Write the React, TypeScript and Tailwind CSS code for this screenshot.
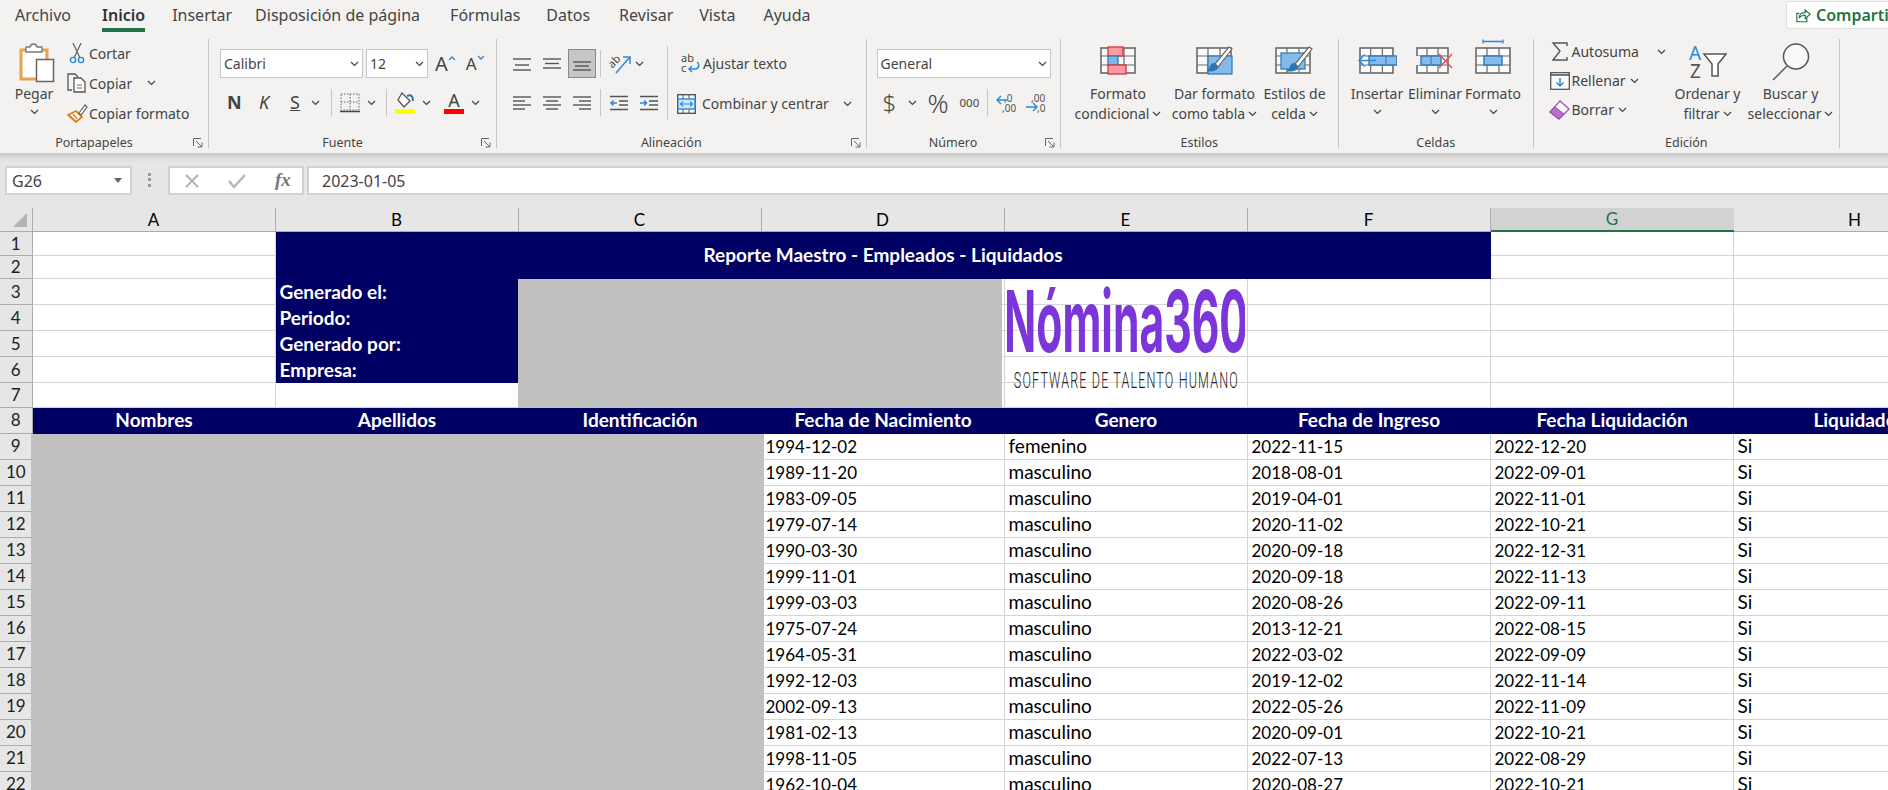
import React from "react";

const NAVY = "bg-[#000064]";

const Chev = ({ className = "" }: { className?: string }) => (
  <svg width="9" height="6" viewBox="0 0 9 6" className={`shrink-0 ${className}`}>
    <path d="M1 1l3.5 3.5L8 1" fill="none" stroke="#444" strokeWidth="1.2" />
  </svg>
);

const Launcher = () => (
  <svg width="10" height="10" viewBox="0 0 10 10">
    <path d="M.5 8V.5H8M3 3l5.5 5.5M9 4.5V9H4.5" fill="none" stroke="#666" strokeWidth="1" />
  </svg>
);

function Group({ w, label, launcher, children }: { w: string; label: string; launcher?: boolean; children: React.ReactNode }) {
  return (
    <div className={`${w} h-[109px] shrink-0 border-r border-[#c8c6c4] flex flex-col`}>
      <div className="h-[99px] flex">{children}</div>
      <div className="flex items-center h-[10px] text-[12.5px] text-[#444]">
        <span className="flex-1 text-center">{label}</span>
        {launcher && (
          <span className="w-[20px] pl-[5px] flex items-center">
            <Launcher />
          </span>
        )}
      </div>
    </div>
  );
}

function Large({ w, icon, lines, chevLine = false }: { w: string; icon: React.ReactNode; lines: string[]; chevLine?: boolean }) {
  return (
    <div className={`${w} shrink-0 flex flex-col items-center`}>
      <div className="h-[45px] flex justify-center">{icon}</div>
      {lines.map((l, i) => (
        <div key={l} className="h-[20px] leading-[20px] flex items-center gap-[3px] whitespace-nowrap">
          {l}
          {i === lines.length - 1 && !chevLine && <Chev />}
        </div>
      ))}
      {chevLine && (
        <div className="h-[16px] flex items-center">
          <Chev />
        </div>
      )}
    </div>
  );
}

function SmallRow({ icon, label, chev, h = "h-[30px]" }: { icon: React.ReactNode; label: string; chev?: string; h?: string }) {
  return (
    <div className={`${h} flex items-center whitespace-nowrap`}>
      <span className="w-[24px] flex justify-center shrink-0">{icon}</span>
      {label}
      {chev && <Chev className={chev} />}
    </div>
  );
}

const Lines = ({ ys, xs }: { ys: number[]; xs: [number, number][] }) => (
  <svg width="18" height="16" viewBox="0 0 18 16">
    {ys.map((y, i) => (
      <path key={y} d={`M${xs[i][0]} ${y}H${xs[i][1]}`} stroke="#555" strokeWidth="1.4" />
    ))}
  </svg>
);

const Arrow = ({ dir }: { dir: "l" | "r" }) => (
  <svg width="18" height="16" viewBox="0 0 18 16">
    <path d="M0 1.5H18M9 6H18M9 10H18M0 14.5H18" stroke="#555" strokeWidth="1.4" />
    {dir === "l" ? (
      <path d="M7 8H1M3.5 5.5L1 8l2.5 2.5" fill="none" stroke="#2b88d8" strokeWidth="1.5" />
    ) : (
      <path d="M0 8H6.5M4 5.5L6.5 8 4 10.5" fill="none" stroke="#2b88d8" strokeWidth="1.5" />
    )}
  </svg>
);

const GridBase = ({ x = 0, y = 0, w = 36, h = 27 }: { x?: number; y?: number; w?: number; h?: number }) => {
  const cx = w / 3;
  const cy = h / 3;
  return (
    <g>
      <rect x={x + 1} y={y + 1} width={w - 2} height={h - 2} fill="#fafafa" stroke="#6a6a6a" strokeWidth="1.6" />
      <path
        d={`M${x + cx} ${y + 1}V${y + h - 1}M${x + cx * 2} ${y + 1}V${y + h - 1}M${x + 1} ${y + cy}H${x + w - 1}M${x + 1} ${y + cy * 2}H${x + w - 1}`}
        stroke="#6a6a6a"
        strokeWidth="1.2"
      />
    </g>
  );
};

const Brush = ({ x, y }: { x: number; y: number }) => (
  <g transform={`translate(${x} ${y})`}>
    <path d="M24 0L27 2 13 20 10 17Z" fill="#fff" stroke="#666" strokeWidth="1.2" />
    <path d="M9 16c3 1 4 3 4 5-2 4-8 4-12 3 3-1 3-3 4-5 1-2 2-3 4-3Z" fill="#2e75b6" />
  </g>
);

const ribbon = {
  paste: (
    <svg width="42" height="45" viewBox="0 0 42 45">
      <rect x="8" y="11" width="26" height="29" fill="#fff" stroke="#e8a24e" strokeWidth="3" />
      <path d="M13 13V8h4c1-4 6-4 7 0h5v5Z" fill="#fff" stroke="#777" strokeWidth="1.3" />
      <rect x="23.5" y="20.5" width="17" height="22" fill="#fff" stroke="#666" strokeWidth="1.5" />
    </svg>
  ),
  cut: (
    <svg width="16" height="21" viewBox="0 0 16 21">
      <path d="M4 0l7 15M12 0L5 15" stroke="#666" strokeWidth="1.3" fill="none" />
      <circle cx="4" cy="17" r="2.6" fill="none" stroke="#2b88d8" strokeWidth="1.4" />
      <circle cx="12" cy="17" r="2.6" fill="none" stroke="#2b88d8" strokeWidth="1.4" />
    </svg>
  ),
  copy: (
    <svg width="20" height="20" viewBox="0 0 20 20">
      <path d="M5 17H1V1h7l3 3" fill="none" stroke="#555" strokeWidth="1.3" />
      <path d="M7 5h7l4 4v10H7Z" fill="#fff" stroke="#555" strokeWidth="1.3" />
      <path d="M10 12h5M10 15h5" stroke="#666" strokeWidth="1.2" />
    </svg>
  ),
  painter: (
    <svg width="21" height="20" viewBox="0 0 21 20">
      <path d="M1 12l8-4 6 6-6 5Z" fill="#fff" stroke="#e07b1a" strokeWidth="1.8" />
      <path d="M3 13l5 5M6 11l4 5" stroke="#e07b1a" strokeWidth="1.4" />
      <path d="M12 10l6-8 2 2-6 8Z" fill="#fff" stroke="#666" strokeWidth="1.2" />
    </svg>
  ),
  borders: (
    <svg width="20" height="20" viewBox="0 0 20 20">
      <path d="M1 1H19V17H1ZM10 1V17M1 9H19" fill="none" stroke="#666" strokeWidth="1" strokeDasharray="1.5 1.5" />
      <path d="M0 18.5H20" stroke="#444" strokeWidth="1.5" />
    </svg>
  ),
  fill: (
    <svg width="20" height="22" viewBox="0 0 20 22">
      <path d="M7 1l8 8-6 6-6-7Z" fill="#fff" stroke="#555" strokeWidth="1.3" />
      <path d="M12 4c4-2 6 0 6 5" fill="none" stroke="#2e75b6" strokeWidth="2" />
      <rect x="0" y="17" width="20" height="5" fill="#ffff00" />
    </svg>
  ),
  wrap: (
    <svg width="19" height="21" viewBox="0 0 19 21">
      <text x="0" y="9" fontSize="11" fill="#444" fontFamily="Noto Sans">ab</text>
      <text x="0" y="19" fontSize="11" fill="#444" fontFamily="Noto Sans">c</text>
      <path d="M16 9c3 2 2 7-2 7H8M11 13l-3 3 3 3" fill="none" stroke="#2b88d8" strokeWidth="1.5" />
    </svg>
  ),
  merge: (
    <svg width="19" height="20" viewBox="0 0 19 20">
      <rect x=".7" y=".7" width="17.6" height="18.6" fill="#fff" stroke="#555" strokeWidth="1.4" />
      <path d="M6 1V5M12 1V5M6 15V19M12 15V19" stroke="#555" />
      <rect x="1" y="5" width="17" height="10" fill="#d4e8f8" stroke="#2b88d8" strokeWidth="1.4" />
      <path d="M3.5 10H15.5M6 7.5L3.5 10 6 12.5M13 7.5l2.5 2.5L13 12.5" fill="none" stroke="#2b88d8" strokeWidth="1.2" />
    </svg>
  ),
  orient: (
    <svg width="23" height="20" viewBox="0 0 23 20">
      <text x="1" y="11" fontSize="11" fill="#444" fontFamily="Noto Sans" transform="rotate(-45 7 9)">ab</text>
      <path d="M8 19L21 4M15 3h7v7" fill="none" stroke="#2b88d8" strokeWidth="1.5" />
    </svg>
  ),
  decInc: (
    <svg width="20" height="20" viewBox="0 0 20 20">
      <text x="8" y="9" fontSize="10" fill="#555" fontFamily="Noto Sans">,0</text>
      <text x="6" y="19" fontSize="10" fill="#555" fontFamily="Noto Sans">,00</text>
      <path d="M12 7H1M5 3L1 7l4 4" fill="none" stroke="#2b88d8" strokeWidth="1.4" />
    </svg>
  ),
  decDec: (
    <svg width="20" height="20" viewBox="0 0 20 20">
      <text x="5" y="9" fontSize="10" fill="#555" fontFamily="Noto Sans">,00</text>
      <text x="11" y="19" fontSize="10" fill="#555" fontFamily="Noto Sans">,0</text>
      <path d="M0 14H11M7 10l4 4-4 4" fill="none" stroke="#2b88d8" strokeWidth="1.4" />
    </svg>
  ),
  condFmt: (
    <svg width="36" height="45" viewBox="0 0 36 45">
      <g transform="translate(0 8)">
        <GridBase />
        <rect x="8" y="0" width="15" height="9" fill="#ff9aa2" stroke="#d13438" strokeWidth="1.3" />
        <rect x="8" y="9" width="10" height="9" fill="#7db7e8" stroke="#2e75b6" strokeWidth="1.2" />
        <rect x="8" y="18" width="18" height="9" fill="#ff9aa2" stroke="#d13438" strokeWidth="1.3" />
      </g>
    </svg>
  ),
  tableFmt: (
    <svg width="38" height="45" viewBox="0 0 38 45">
      <g transform="translate(0 8)">
        <GridBase w={36} />
        <rect x="12" y="9" width="24" height="18" fill="#85bbea" stroke="#2e75b6" strokeWidth="1.2" />
        <Brush x={9} y={0} />
      </g>
    </svg>
  ),
  cellStyle: (
    <svg width="39" height="45" viewBox="0 0 39 45">
      <g transform="translate(0 8)">
        <GridBase w={36} />
        <rect x="6" y="6" width="24" height="16" fill="#85bbea" stroke="#2e75b6" strokeWidth="1.2" />
        <Brush x={10} y={0} />
      </g>
    </svg>
  ),
  insert: (
    <svg width="40" height="45" viewBox="0 0 40 45">
      <g transform="translate(2 8)">
        <GridBase w={35} />
        <rect x="10" y="9" width="28" height="9" fill="#85bbea" stroke="#2e75b6" strokeWidth="1.4" />
        <path d="M27 9V18" stroke="#2e75b6" />
        <path d="M17 13.5H0M6 7.5l-6 6 6 6" fill="#fff" stroke="#2b88d8" strokeWidth="1.5" />
      </g>
    </svg>
  ),
  del: (
    <svg width="38" height="45" viewBox="0 0 38 45">
      <g transform="translate(0 8)">
        <GridBase w={33} />
        <rect x="5" y="9" width="20" height="9" fill="#85bbea" stroke="#2e75b6" strokeWidth="1.4" />
        <path d="M15 9V18" stroke="#2e75b6" />
        <rect x="0" y="9" width="4" height="9" fill="#f3f2f1" />
        <path d="M23 7l13 14M36 7L23 21" stroke="#e8505b" strokeWidth="1.5" />
      </g>
    </svg>
  ),
  format: (
    <svg width="36" height="45" viewBox="0 0 36 45">
      <path d="M8 2.5H28M8 .5v4M28 .5v4" stroke="#2b88d8" strokeWidth="1.3" fill="none" />
      <g transform="translate(0 8)">
        <GridBase />
        <rect x="9" y="9" width="18" height="9" fill="#85bbea" stroke="#2e75b6" strokeWidth="1.4" />
      </g>
    </svg>
  ),
  sigma: (
    <svg width="18" height="19" viewBox="0 0 18 19">
      <path d="M16 4V1H2l7 8-7 9h14v-3" fill="none" stroke="#555" strokeWidth="1.4" />
    </svg>
  ),
  fillDown: (
    <svg width="20" height="18" viewBox="0 0 20 18">
      <rect x=".7" y=".7" width="18.6" height="16.6" fill="#fff" stroke="#555" strokeWidth="1.3" />
      <path d="M1 3H19" stroke="#555" strokeWidth="1.6" />
      <path d="M10 6V14M6.5 10.5L10 14l3.5-3.5" fill="none" stroke="#2b88d8" strokeWidth="1.5" />
    </svg>
  ),
  eraser: (
    <svg width="21" height="20" viewBox="0 0 21 20">
      <path d="M1 12L11 1l9 8-10 10Z" fill="#fff" stroke="#a65dbf" strokeWidth="1.5" />
      <path d="M1 12l5-5 9 7-5 5Z" fill="#b86fd0" stroke="#8e44ad" strokeWidth="1" />
    </svg>
  ),
  sort: (
    <svg width="38" height="36" viewBox="0 0 38 36">
      <text x="0" y="16" fontSize="19" fill="#2b88d8" fontFamily="Noto Sans">A</text>
      <text x="1" y="34" fontSize="19" fill="#555" fontFamily="Noto Sans">Z</text>
      <path d="M15 10H37L29 20V32H23V20Z" fill="#fff" stroke="#555" strokeWidth="1.5" />
    </svg>
  ),
  search: (
    <svg width="38" height="38" viewBox="0 0 38 38">
      <circle cx="24" cy="13.5" r="12.5" fill="#fafafa" stroke="#555" strokeWidth="1.5" />
      <path d="M15 23L1 37" stroke="#555" strokeWidth="1.5" />
    </svg>
  ),
  share: (
    <svg width="15" height="15" viewBox="0 0 18 17" className="shrink-0">
      <path d="M4 6H1V16H13V11" fill="none" stroke="#217346" strokeWidth="1.4" />
      <path d="M4 11c0-4 3-6 7-6V2l6 5-6 5V8c-3 0-5 1-7 3Z" fill="none" stroke="#217346" strokeWidth="1.4" />
    </svg>
  ),
};

function Ribbon() {
  return (
    <div className="h-[153px] bg-[#f3f2f1] font-['Noto_Sans',sans-serif] text-[14px] text-[#444]">
      <div className="h-[39px] flex items-start">
        <div className="flex text-[16px] pl-[15px] pt-[3px] h-[32px] whitespace-nowrap gap-[28px]">
          <span>Archivo</span>
          <span className="ml-[3px] h-[29px] border-b-4 border-[#217346] font-semibold text-[#333]">Inicio</span>
          <span className="ml-[-1px]">Insertar</span>
          <span className="ml-[-5px]">Disposición de página</span>
          <span className="ml-[2px]">Fórmulas</span>
          <span className="ml-[-2px]">Datos</span>
          <span className="ml-[1px]">Revisar</span>
          <span className="ml-[-2px]">Vista</span>
          <span>Ayuda</span>
        </div>
        <div className="ml-auto mt-[1px] w-[102px] h-[28px] overflow-hidden bg-white border border-[#e1dfdd] border-r-0 rounded-l-[4px] flex items-center gap-[5px] pl-[9px] whitespace-nowrap text-[16px] font-semibold text-[#217346]">
          {ribbon.share}
          Compartir
        </div>
      </div>

      <div className="flex">
        <Group w="w-[209px]" label="Portapapeles" launcher>
          <div className="ml-[10px] w-[48px]">
            <Large w="w-[48px]" icon={ribbon.paste} lines={["Pegar"]} chevLine />
          </div>
          <div className="ml-[7px] mt-[-1px]">
            <SmallRow icon={ribbon.cut} label="Cortar" />
            <SmallRow icon={ribbon.copy} label="Copiar" chev="ml-[15px]" />
            <SmallRow icon={ribbon.painter} label="Copiar formato" />
          </div>
        </Group>

        <Group w="w-[288px]" label="Fuente" launcher>
          <div className="pl-[11px] pt-[10px]">
            <div className="flex items-center h-[29px]">
              <div className="w-[143px] h-[29px] bg-white border border-[#c8c6c4] flex items-center justify-between px-[3px]">
                Calibri
                <Chev />
              </div>
              <div className="ml-[3px] w-[62px] h-[29px] bg-white border border-[#c8c6c4] flex items-center justify-between px-[3px]">
                12
                <Chev />
              </div>
              <span className="ml-[7px] text-[20px] leading-none">A</span>
              <svg width="8" height="6" viewBox="0 0 8 6" className="mb-[12px]"><path d="M1 5l3-3 3 3" fill="none" stroke="#2b88d8" strokeWidth="1.3" /></svg>
              <span className="ml-[10px] text-[17px] leading-none">A</span>
              <svg width="8" height="6" viewBox="0 0 8 6" className="mb-[12px]"><path d="M1 1l3 3 3-3" fill="none" stroke="#2b88d8" strokeWidth="1.3" /></svg>
            </div>
            <div className="flex items-center h-[29px] mt-[10px]">
              <span className="ml-[7px] w-[12px] font-bold text-[18px]">N</span>
              <span className="ml-[20px] w-[10px] italic text-[18px]">K</span>
              <span className="ml-[21px] w-[9px] underline text-[18px]">S</span>
              <Chev className="ml-[12px]" />
              <span className="ml-[11px] w-px h-[27px] bg-[#c8c6c4]" />
              <span className="ml-[8px]">{ribbon.borders}</span>
              <Chev className="ml-[7px]" />
              <span className="ml-[10px] w-px h-[27px] bg-[#c8c6c4]" />
              <span className="ml-[8px]">{ribbon.fill}</span>
              <Chev className="ml-[7px]" />
              <div className="ml-[13px] w-[20px] flex flex-col items-center">
                <span className="text-[18px] leading-[17px]">A</span>
                <span className="w-[20px] h-[5px] bg-[#ff0000]" />
              </div>
              <Chev className="ml-[7px]" />
            </div>
          </div>
        </Group>

        <Group w="w-[369.5px]" label="Alineación" launcher>
          <div className="pl-[16px] pt-[3px] w-[171px] shrink-0 border-r border-[#c8c6c4] h-[74px] mt-[7px]">
            <div className="flex items-center h-[29px]">
              <Lines ys={[3, 9, 14]} xs={[[0, 18], [2, 16], [0, 18]]} />
              <span className="ml-[12px]"><Lines ys={[3, 7.5, 12]} xs={[[0, 18], [2, 16], [0, 18]]} /></span>
              <span className="ml-[7px] w-[28px] h-[29px] bg-[#c8c6c4] border border-[#8a8886] flex items-center justify-center"><Lines ys={[6, 10, 14]} xs={[[0, 18], [2, 16], [0, 18]]} /></span>
              <span className="ml-[4px] w-px h-[27px] bg-[#c8c6c4]" />
              <span className="ml-[7px]">{ribbon.orient}</span>
              <Chev className="ml-[4px]" />
            </div>
            <div className="flex items-center h-[29px] mt-[10px]">
              <Lines ys={[2, 6, 10, 14]} xs={[[0, 18], [0, 12], [0, 18], [0, 12]]} />
              <span className="ml-[12px]"><Lines ys={[2, 6, 10, 14]} xs={[[0, 18], [3, 15], [0, 18], [3, 15]]} /></span>
              <span className="ml-[12px]"><Lines ys={[2, 6, 10, 14]} xs={[[0, 18], [6, 18], [0, 18], [6, 18]]} /></span>
              <span className="ml-[9px] w-px h-[27px] bg-[#c8c6c4]" />
              <span className="ml-[9px]"><Arrow dir="l" /></span>
              <span className="ml-[12px]"><Arrow dir="r" /></span>
            </div>
          </div>
          <div className="pl-[9px]">
            <div className="h-[39px] pt-[10px] flex items-center gap-[3px] whitespace-nowrap">
              <span className="ml-[4px]">{ribbon.wrap}</span>
              Ajustar texto
            </div>
            <div className="h-[39px] pt-[12px] flex items-center gap-[6px] whitespace-nowrap">
              {ribbon.merge}
              Combinar y centrar
              <Chev className="ml-[8px]" />
            </div>
          </div>
        </Group>

        <Group w="w-[194px]" label="Número" launcher>
          <div className="pl-[10px] pt-[10px]">
            <div className="w-[174px] h-[29px] bg-white border border-[#c8c6c4] flex items-center justify-between px-[3px]">
              General
              <Chev />
            </div>
            <div className="flex items-center h-[29px] mt-[10px]">
              <span className="ml-[6px] w-[14px] text-[24px] leading-none font-light">$</span>
              <Chev className="ml-[11px]" />
              <span className="ml-[11px] w-[22px] text-[26px] leading-none font-light">%</span>
              <span className="ml-[10px] w-[21px] text-[11.5px]">000</span>
              <span className="ml-[6px] w-px h-[27px] bg-[#c8c6c4]" />
              <span className="ml-[8px]">{ribbon.decInc}</span>
              <span className="ml-[10px]">{ribbon.decDec}</span>
            </div>
          </div>
        </Group>

        <Group w="w-[278.5px]" label="Estilos">
          <Large w="w-[109px] ml-[3px]" icon={ribbon.condFmt} lines={["Formato", "condicional"]} />
          <Large w="w-[84px]" icon={ribbon.tableFmt} lines={["Dar formato", "como tabla"]} />
          <Large w="w-[76px]" icon={ribbon.cellStyle} lines={["Estilos de", "celda"]} />
        </Group>

        <Group w="w-[194.5px]" label="Celdas">
          <Large w="w-[60px] ml-[8px]" icon={ribbon.insert} lines={["Insertar"]} chevLine />
          <Large w="w-[56px]" icon={ribbon.del} lines={["Eliminar"]} chevLine />
          <Large w="w-[60px]" icon={ribbon.format} lines={["Formato"]} chevLine />
        </Group>

        <Group w="w-[306.5px]" label="Edición">
          <div className="ml-[14px] mt-[-2px] w-[120px]">
            <SmallRow h="h-[29px]" icon={ribbon.sigma} label="Autosuma" chev="ml-[18px]" />
            <SmallRow h="h-[29px]" icon={ribbon.fillDown} label="Rellenar" chev="ml-[4px]" />
            <SmallRow h="h-[29px]" icon={ribbon.eraser} label="Borrar" chev="ml-[4px]" />
          </div>
          <Large w="w-[80px]" icon={<div className="pt-[5px]">{ribbon.sort}</div>} lines={["Ordenar y", "filtrar"]} />
          <Large w="w-[86px]" icon={<div className="pt-[4px]">{ribbon.search}</div>} lines={["Buscar y", "seleccionar"]} />
        </Group>
      </div>
    </div>
  );
}

function FormulaBar() {
  return (
    <div className="h-[55px] bg-[#e6e6e6] shadow-[inset_0_9px_7px_-7px_#b8b8b8] pt-[13px] flex font-['Noto_Sans',sans-serif] text-[16px] text-[#444]">
      <div className="ml-[5px] w-[127px] h-[29px] bg-white border-2 border-[#d2d2d2] flex items-center justify-between pl-[5px] pr-[8px]">
        G26
        <svg width="8" height="5" viewBox="0 0 8 5"><path d="M0 0h8L4 5Z" fill="#666" /></svg>
      </div>
      <div className="ml-[16px] w-[3px] h-[14px] mt-[7px] border-l-[3px] border-dotted border-[#999]" />
      <div className="ml-[17px] w-[136px] h-[29px] bg-white border-2 border-[#d2d2d2] flex items-center pl-[14px]">
        <svg width="16" height="16" viewBox="0 0 16 16"><path d="M2 2l12 12M14 2L2 14" stroke="#b4b4b4" strokeWidth="2" /></svg>
        <svg width="18" height="16" viewBox="0 0 18 16" className="ml-[28px]"><path d="M1 8l5 6L17 2" fill="none" stroke="#b4b4b4" strokeWidth="2.4" /></svg>
        <span className="ml-[29px] font-['Liberation_Serif',serif] italic font-bold text-[19px] text-[#777]">fx</span>
      </div>
      <div className="ml-[3px] flex-1 h-[29px] bg-white border-y-2 border-l-2 border-[#d2d2d2] flex items-center pl-[13px]">2023-01-05</div>
    </div>
  );
}

const HEAD = ["Nombres", "Apellidos", "Identificación", "Fecha de Nacimiento", "Genero", "Fecha de Ingreso", "Fecha Liquidación", "Liquidado"];

const DATA: [string, string, string, string][] = [
  ["1994-12-02", "femenino", "2022-11-15", "2022-12-20"],
  ["1989-11-20", "masculino", "2018-08-01", "2022-09-01"],
  ["1983-09-05", "masculino", "2019-04-01", "2022-11-01"],
  ["1979-07-14", "masculino", "2020-11-02", "2022-10-21"],
  ["1990-03-30", "masculino", "2020-09-18", "2022-12-31"],
  ["1999-11-01", "masculino", "2020-09-18", "2022-11-13"],
  ["1999-03-03", "masculino", "2020-08-26", "2022-09-11"],
  ["1975-07-24", "masculino", "2013-12-21", "2022-08-15"],
  ["1964-05-31", "masculino", "2022-03-02", "2022-09-09"],
  ["1992-12-03", "masculino", "2019-12-02", "2022-11-14"],
  ["2002-09-13", "masculino", "2022-05-26", "2022-11-09"],
  ["1981-02-13", "masculino", "2020-09-01", "2022-10-21"],
  ["1998-11-05", "masculino", "2022-07-13", "2022-08-29"],
  ["1962-10-04", "masculino", "2020-08-27", "2022-10-21"],
];

const RowHead = ({ n }: { n: number }) => (
  <div className="bg-[#e6e6e6] border-r border-b border-[#ababab] flex items-center justify-center text-[17px] text-[#222]">{n}</div>
);

const Cell = ({ children }: { children?: React.ReactNode }) => (
  <div className="border-r border-b border-[#d4d4d4] pl-[4px] flex items-center whitespace-nowrap overflow-hidden">{children}</div>
);

const Day = ({ children }: { children: string }) => <span className="text-[17px] pt-[2px]">{children}</span>;

const Label = ({ children }: { children: React.ReactNode }) => (
  <div className={`${NAVY} text-white font-bold pl-[4px] pt-[1px] flex items-center whitespace-nowrap`}>{children}</div>
);

function Sheet() {
  return (
    <div className="relative font-['Lato',sans-serif] text-[19px] text-black bg-white">
      <div className="grid grid-cols-[32.5px_repeat(8,243px)] grid-rows-[24px_23.5px_23.5px_26px_26px_26px_26px_24.5px_26px_repeat(14,26px)]">
        <div className="bg-[#e6e6e6] border-r border-b border-[#ababab] flex items-end justify-end pr-[5px] pb-[4px]">
          <svg width="14" height="14" viewBox="0 0 14 14"><path d="M14 0V14H0Z" fill="#b4b4b4" /></svg>
        </div>
        {["A", "B", "C", "D", "E", "F", "G", "H"].map((c) => (
          <div
            key={c}
            className={
              c === "G"
                ? "bg-[#d2d2d2] border-b-2 border-[#217346] text-[17px] text-[#217346] flex items-center justify-center"
                : "bg-[#e6e6e6] border-r border-b border-[#ababab] text-[17px] flex items-center justify-center"
            }
          >
            {c}
          </div>
        ))}

        <RowHead n={1} />
        <Cell />
        <div className={`${NAVY} col-span-5 row-span-2 flex items-center justify-center text-white font-bold`}>
          Reporte Maestro - Empleados - Liquidados
        </div>
        <Cell />
        <Cell />
        <RowHead n={2} />
        <Cell />
        <Cell />
        <Cell />

        {["Generado el:", "Periodo:", "Generado por:", "Empresa:"].map((l, i) => (
          <React.Fragment key={l}>
            <RowHead n={i + 3} />
            <Cell />
            <Label>{l}</Label>
            <Cell />
            <Cell />
            <Cell />
            <Cell />
            <Cell />
            <Cell />
          </React.Fragment>
        ))}

        <RowHead n={7} />
        {Array.from({ length: 8 }, (_, i) => (
          <Cell key={i} />
        ))}

        <RowHead n={8} />
        {HEAD.map((h) => (
          <div key={h} className={`${NAVY} text-white font-bold flex items-center justify-center`}>
            {h}
          </div>
        ))}

        {DATA.map((r, i) => (
          <React.Fragment key={i}>
            <RowHead n={i + 9} />
            <Cell />
            <Cell />
            <Cell />
            <Cell><Day>{r[0]}</Day></Cell>
            <Cell>{r[1]}</Cell>
            <Cell><Day>{r[2]}</Day></Cell>
            <Cell><Day>{r[3]}</Day></Cell>
            <Cell>Si</Cell>
          </React.Fragment>
        ))}
      </div>

      {/* hidden data, greyed out in the report */}
      <div className="absolute left-[518px] top-[71px] w-[484px] h-[129px] bg-[#c0c0c0]" />
      <div className="absolute left-[31px] top-[226px] w-[733px] h-[360px] bg-[#c0c0c0]" />

      {/* logo picture sitting over E3:E7 */}
      <div className="absolute left-[1007px] top-[62px] w-[238px] h-[134px] flex flex-col items-center overflow-hidden">
        <div className="font-['Inter',sans-serif] font-bold text-[#7b35d9] text-[60px] leading-[72px] whitespace-nowrap scale-x-[0.71] scale-y-[1.42] origin-top">
          Nómina360
        </div>
        <div className="font-['Roboto',sans-serif] font-light text-[#222] text-[22px] leading-[20px] whitespace-nowrap tracking-[2px] scale-x-[0.57] mt-[29px]">
          SOFTWARE DE TALENTO HUMANO
        </div>
      </div>
    </div>
  );
}

export default function App() {
  return (
    <div className="w-[1888px] h-[790px] overflow-hidden bg-white">
      <Ribbon />
      <FormulaBar />
      <Sheet />
    </div>
  );
}
